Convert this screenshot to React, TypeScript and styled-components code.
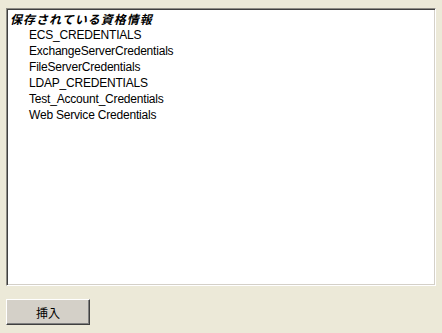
import React from "react";
import styled, { createGlobalStyle } from "styled-components";

const credentials = [
  "ECS_CREDENTIALS",
  "ExchangeServerCredentials",
  "FileServerCredentials",
  "LDAP_CREDENTIALS",
  "Test_Account_Credentials",
  "Web Service Credentials",
];

const App = () => {
  return (
    <>
      <GlobalStyle />
      <Page>
        <ListBox>
          <ListHeader>保存されている資格情報</ListHeader>
          {credentials.map((name) => (
            <ListItem key={name}>{name}</ListItem>
          ))}
        </ListBox>
        <InsertButton type="button">挿入</InsertButton>
      </Page>
    </>
  );
};

const GlobalStyle = createGlobalStyle`
  html, body {
    margin: 0;
    padding: 0;
    background: #ece9d8;
  }
`;

/** 画面全体 */
const Page = styled.div`
  width: 442px;
  height: 333px;
  box-sizing: border-box;
  padding: 8px 6px 0 6px;
  display: flex;
  flex-direction: column;
  align-items: flex-start;
  gap: 13px;
  font-family: Arial, "Liberation Sans", "Noto Sans CJK JP", sans-serif;
`;

/** 一覧 (窪んだ枠) */
const ListBox = styled.div`
  width: 430px;
  height: 278px;
  box-sizing: border-box;
  background: #ffffff;
  border-top: 1px solid #8e8c85;
  border-left: 1px solid #8e8c85;
  border-right: 1px solid #ffffff;
  border-bottom: 1px solid #ffffff;
  box-shadow: inset 1px 1px 0 #404040, inset -1px -1px 0 #d4d0c8;
  padding: 2px 0 0 3px;
  display: flex;
  flex-direction: column;
`;

/** 一覧の見出し */
const ListHeader = styled.div`
  font-family: "Noto Sans CJK JP", sans-serif;
  font-size: 12px;
  font-weight: 700;
  font-style: italic;
  line-height: 16px;
  color: #000000;
  letter-spacing: 1px;
`;

/** 一覧の行 */
const ListItem = styled.div`
  font-size: 12px;
  line-height: 16px;
  color: #000000;
  letter-spacing: -0.2px;
  padding-left: 19px;
`;

/** 挿入ボタン */
const InsertButton = styled.button`
  width: 84px;
  height: 26px;
  box-sizing: border-box;
  margin: 0;
  padding: 0;
  background: #d4d0c8;
  border-top: 1px solid #ffffff;
  border-left: 1px solid #ffffff;
  border-right: 1px solid #404040;
  border-bottom: 1px solid #404040;
  box-shadow: inset -1px -1px 0 #808080;
  font-family: "Noto Sans CJK JP", sans-serif;
  font-size: 12px;
  color: #000000;
`;

export default App;
